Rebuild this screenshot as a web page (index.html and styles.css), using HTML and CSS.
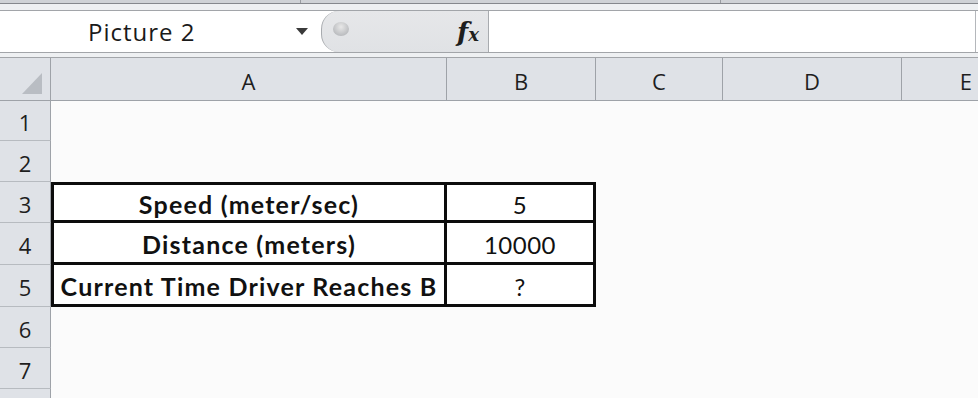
FILE: index.html
```html
<!DOCTYPE html>
<html>
<head>
<meta charset="utf-8">
<link rel="stylesheet" href="styles.css">
</head>
<body>
<div class="top">
  <div class="seg seg1"></div>
  <div class="seg seg2"></div>
  <div class="seg seg3"></div>
</div>
<div class="gap1"></div>
<div class="fbar">
  <div class="namebox">
    <span class="name">Picture 2</span>
    <span class="arrow"></span>
  </div>
  <div class="fxzone">
    <span class="knob"></span>
    <span class="fx"><span class="f">f</span><span class="x">x</span></span>
  </div>
  <div class="input"></div>
</div>
<div class="gap2"></div>
<div class="sheet">
  <div class="hd corner"><span class="tri"></span></div>
  <div class="hd col">A</div>
  <div class="hd col">B</div>
  <div class="hd col">C</div>
  <div class="hd col">D</div>
  <div class="hd col right">E</div>

  <div class="hd row">1</div><div class="c"></div><div class="c"></div><div class="c"></div><div class="c"></div><div class="c"></div>
  <div class="hd row">2</div><div class="c"></div><div class="c"></div><div class="c"></div><div class="c"></div><div class="c"></div>

  <div class="hd row">3</div>
  <div class="c t lab first">Speed (meter/sec)</div>
  <div class="c t val first">5</div>
  <div class="c"></div><div class="c"></div><div class="c"></div>

  <div class="hd row">4</div>
  <div class="c t lab">Distance (meters)</div>
  <div class="c t val">10000</div>
  <div class="c"></div><div class="c"></div><div class="c"></div>

  <div class="hd row">5</div>
  <div class="c t lab">Current Time Driver Reaches B</div>
  <div class="c t val">?</div>
  <div class="c"></div><div class="c"></div><div class="c"></div>

  <div class="hd row">6</div><div class="c"></div><div class="c"></div><div class="c"></div><div class="c"></div><div class="c"></div>
  <div class="hd row">7</div><div class="c"></div><div class="c"></div><div class="c"></div><div class="c"></div><div class="c"></div>
  <div class="hd row"></div><div class="c"></div><div class="c"></div><div class="c"></div><div class="c"></div><div class="c"></div>
</div>
</body>
</html>
```

FILE: styles.css
```css
* { box-sizing: border-box; }
html, body { margin: 0; padding: 0; }
body {
  width: 978px;
  height: 398px;
  overflow: hidden;
  background: #fbfbfb;
  font-family: "Open Sans", "Noto Sans", sans-serif;
  color: #1b1b1b;
}

.top {
  display: flex;
  height: 4px;
  border-bottom: 1px solid #85888d;
  background: #cfd2d6;
}
.seg { height: 100%; }
.seg1 { width: 301px; border-right: 1px solid #9a9da2; }
.seg2 { width: 420px; border-right: 1px solid #9a9da2; }
.seg3 { flex: 1; }

.gap1 {
  height: 7px;
  background: #eef0f2;
  border-bottom: 1px solid #a2a5a9;
}

.fbar {
  display: flex;
  height: 42px;
  background: #ffffff;
  border-bottom: 1px solid #a2a5a9;
}
.namebox {
  width: 321px;
  display: flex;
  align-items: center;
  padding-left: 88px;
}
.name {
  font-size: 24px;
  color: #1a1a1a;
  letter-spacing: 1px;
}
.arrow {
  margin-left: auto;
  margin-right: 13px;
  width: 0;
  height: 0;
  border-left: 6px solid transparent;
  border-right: 6px solid transparent;
  border-top: 7px solid #3a3a3a;
}
.fxzone {
  width: 168px;
  height: 100%;
  background: linear-gradient(#e6e7e9, #e0e2e5);
  border: 1px solid #a8abaf;
  border-top: none;
  border-bottom: none;
  border-radius: 18px 0 0 18px;
  display: flex;
  align-items: center;
  padding-left: 11px;
  padding-right: 9px;
}
.knob {
  width: 16px;
  height: 14px;
  border-radius: 50%;
  background: radial-gradient(circle at 50% 35%, #e8e8e8, #b9bbbe 75%);
  margin-top: -6px;
}
.fx {
  margin-left: auto;
  font-family: "DejaVu Serif", "Liberation Serif", serif;
  font-style: italic;
  font-weight: bold;
  color: #1e1e1e;
  display: flex;
  align-items: baseline;
}
.fx .f { font-size: 26px; }
.fx .x { font-size: 18px; margin-left: 0; }
.input {
  flex: 1;
  border-right: 1px solid #b4b7bb;
  margin-right: 2px;
}

.gap2 {
  height: 5px;
  background: #eef0f2;
  border-bottom: 1px solid #a2a5a9;
}

.sheet {
  display: grid;
  grid-template-columns: 51px 396px 149px 127px 179px 1fr;
  grid-template-rows: 43px 40px 41px 41px 42px 42px 41px 41px 20px;
}
.hd {
  background: #dfe2e7;
  border-right: 1px solid #9ea2a8;
  border-bottom: 1px solid #9ea2a8;
  display: flex;
  align-items: center;
  justify-content: center;
  font-size: 22px;
  color: #1e1e1e;
  padding-top: 3px;
}
.hd.right { border-right: none; justify-content: flex-end; padding-right: 6px; }
.hd.row { border-bottom-color: #b7bbc0; }
.corner {
  justify-content: flex-start;
  align-items: flex-end;
  padding: 0 0 6px 22px;
}
.tri {
  width: 0;
  height: 0;
  border-left: 20px solid transparent;
  border-bottom: 21px solid #b9bdc3;
}
.c { background: #fbfbfb; }

.t {
  display: flex;
  align-items: center;
  justify-content: center;
  font-family: "Lato", "Open Sans", sans-serif;
  font-size: 24px;
  letter-spacing: 0.5px;
  color: #111;
  background: #ffffff;
  border-bottom: 3px solid #0c0c0c;
  padding-top: 3px;
}
.t.first { border-top: 3px solid #0c0c0c; }
.lab {
  font-weight: bold;
  font-size: 25px;
  letter-spacing: 1.2px;
  border-left: 3px solid #0c0c0c;
  border-right: 3px solid #0c0c0c;
}
.val { border-right: 3px solid #0c0c0c; }
```
